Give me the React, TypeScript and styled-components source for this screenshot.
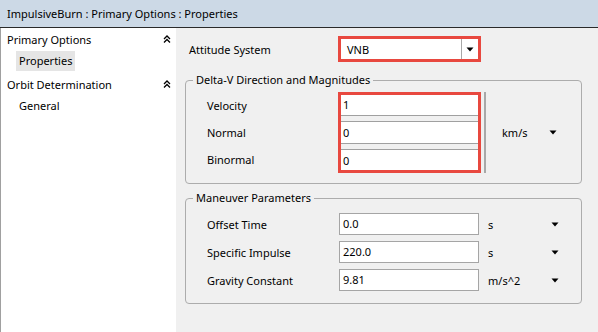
import styled, { createGlobalStyle } from "styled-components";

const GlobalStyle = createGlobalStyle`
  html, body {
    margin: 0;
    padding: 0;
  }
  body {
    font-family: "Noto Sans", "Liberation Sans", sans-serif;
    font-size: 11px;
    color: #000;
  }
`;

const ChevronsUp = () => (
  <svg width="8" height="8" viewBox="0 0 8 8">
    <path d="M1 4 L4 1 L7 4 M1 7.5 L4 4.5 L7 7.5" fill="none" stroke="#000" strokeWidth="1.3" />
  </svg>
);

const Caret = () => (
  <svg width="8" height="5" viewBox="0 0 8 5">
    <path d="M0.5 0.5 H7.5 L4 4.5 Z" fill="#000" />
  </svg>
);

const treeData = [
  { title: "Primary Options", children: ["Properties"] },
  { title: "Orbit Determination", children: ["General"] },
];

const deltaV = [
  { label: "Velocity", value: "1" },
  { label: "Normal", value: "0" },
  { label: "Binormal", value: "0" },
];

const maneuver = [
  { label: "Offset Time", value: "0.0", unit: "s" },
  { label: "Specific Impulse", value: "220.0", unit: "s" },
  { label: "Gravity Constant", value: "9.81", unit: "m/s^2" },
];

const App = () => {
  return (
    <Window>
      <GlobalStyle />
      <TitleBar>ImpulsiveBurn : Primary Options : Properties</TitleBar>
      <Body>
        <Sidebar>
          {treeData.map((node) => (
            <TreeGroup key={node.title}>
              <TreeRow>
                <span>{node.title}</span>
                <ChevronsUp />
              </TreeRow>
              {node.children.map((child) => (
                <TreeRow key={child}>
                  <TreeChild $selected={child === "Properties"}>{child}</TreeChild>
                </TreeRow>
              ))}
            </TreeGroup>
          ))}
        </Sidebar>
        <Content>
          <AttitudeRow>
            <FieldLabel $width={149}>Attitude System</FieldLabel>
            <Combo>
              <ComboText>VNB</ComboText>
              <ComboButton>
                <Caret />
              </ComboButton>
            </Combo>
          </AttitudeRow>

          <Group $top={10} $bottom={10}>
            <Legend>Delta-V Direction and Magnitudes</Legend>
            <DeltaLayout>
              <LabelColumn>
                {deltaV.map((r) => (
                  <StackLabel key={r.label}>{r.label}</StackLabel>
                ))}
              </LabelColumn>
              <Highlight>
                {deltaV.map((r) => (
                  <StackInput key={r.label}>{r.value}</StackInput>
                ))}
              </Highlight>
              <UnitPanel>
                <UnitCell $left={16} $width={55}>
                  <span>km/s</span>
                  <Caret />
                </UnitCell>
              </UnitPanel>
            </DeltaLayout>
          </Group>

          <Group $top={6} $bottom={12}>
            <Legend>Maneuver Parameters</Legend>
            <ParamGrid>
              {maneuver.map((r) => (
                <ParamRow key={r.label}>
                  <FieldLabel $width={132}>{r.label}</FieldLabel>
                  <TextBox>{r.value}</TextBox>
                  <UnitCell $left={9} $width={71}>
                    <span>{r.unit}</span>
                    <Caret />
                  </UnitCell>
                </ParamRow>
              ))}
            </ParamGrid>
          </Group>
        </Content>
      </Body>
    </Window>
  );
};

export default App;

const Window = styled.div`
  width: 598px;
  height: 332px;
  display: flex;
  flex-direction: column;
  overflow: hidden;
`;

const TitleBar = styled.div`
  height: 27px;
  line-height: 28px;
  padding-left: 7px;
  background: #ccd9e6;
  border-bottom: 1px solid #2a2a2a;
  white-space: nowrap;
`;

const Body = styled.div`
  flex: 1;
  display: flex;
  min-height: 0;
`;

const Sidebar = styled.div`
  width: 175px;
  background: #fff;
  border-left: 1px solid #a0a0a0;
  display: flex;
  flex-direction: column;
  gap: 1px;
`;

const TreeGroup = styled.div`
  display: flex;
  flex-direction: column;
`;

const TreeRow = styled.div`
  height: 22px;
  display: flex;
  align-items: center;
  justify-content: space-between;
  padding: 0 5px 0 6px;
`;

const TreeChild = styled.span<{ $selected?: boolean }>`
  margin-left: 9px;
  padding: 2px 3px 3px;
  background: ${(p) => (p.$selected ? "#e5e5e5" : "transparent")};
`;

const Content = styled.div`
  flex: 1;
  background: #f0f0f0;
  padding: 8px 16px 0 9px;
`;

const AttitudeRow = styled.div`
  display: flex;
  align-items: center;
  padding-left: 4px;
`;

const FieldLabel = styled.div<{ $width: number }>`
  width: ${(p) => p.$width}px;
  flex-shrink: 0;
  white-space: nowrap;
`;

const Combo = styled.div`
  width: 143px;
  height: 26px;
  box-sizing: border-box;
  border: 3px solid #e8483f;
  background: #fff;
  display: flex;
  align-items: stretch;
`;

const ComboText = styled.div`
  flex: 1;
  display: flex;
  align-items: center;
  padding-left: 6px;
`;

const ComboButton = styled.div`
  width: 16px;
  border-left: 1px solid #a8a8a8;
  display: flex;
  align-items: center;
  justify-content: center;
`;

const Group = styled.fieldset<{ $top: number; $bottom: number }>`
  margin: ${(p) => p.$top}px 0 0;
  padding: 0 0 ${(p) => p.$bottom}px;
  border: 1px solid #acacac;
  border-radius: 4px;
  min-width: 0;
`;

const Legend = styled.legend`
  margin-left: 7px;
  padding: 0 3px;
  line-height: 16px;
`;

const DeltaLayout = styled.div`
  display: flex;
  align-items: stretch;
  padding: 4px 0 0 21px;
`;

const LabelColumn = styled.div`
  width: 131px;
  display: flex;
  flex-direction: column;
  gap: 5px;
  padding-top: 3px;
`;

const StackLabel = styled.div`
  height: 23px;
  line-height: 23px;
  &:first-child,
  &:last-child {
    height: 21px;
    line-height: 21px;
  }
`;

const Highlight = styled.div`
  width: 143px;
  box-sizing: border-box;
  border: 3px solid #e8483f;
  display: flex;
  flex-direction: column;
  gap: 5px;
`;

const StackInput = styled.div`
  height: 23px;
  box-sizing: border-box;
  background: #fff;
  border-top: 1px solid #a0a0a0;
  border-bottom: 1px solid #a0a0a0;
  line-height: 21px;
  padding-left: 2px;
  &:first-child {
    height: 21px;
    border-top: none;
    line-height: 20px;
  }
  &:last-child {
    height: 21px;
    border-bottom: none;
    line-height: 22px;
  }
`;

const UnitPanel = styled.div`
  margin-left: 3px;
  border-left: 2px solid #a8a8a8;
  display: flex;
  align-items: center;
`;

const UnitCell = styled.div<{ $left: number; $width: number }>`
  width: ${(p) => p.$width}px;
  margin-left: ${(p) => p.$left}px;
  display: flex;
  align-items: center;
  justify-content: space-between;
  white-space: nowrap;
`;

const ParamGrid = styled.div`
  display: flex;
  flex-direction: column;
  gap: 6px;
  padding: 7px 0 0 21px;
`;

const ParamRow = styled.div`
  display: flex;
  align-items: center;
`;

const TextBox = styled.div`
  width: 140px;
  height: 22px;
  box-sizing: border-box;
  border: 1px solid #a5a5a5;
  background: #fff;
  line-height: 20px;
  padding-left: 3px;
`;
